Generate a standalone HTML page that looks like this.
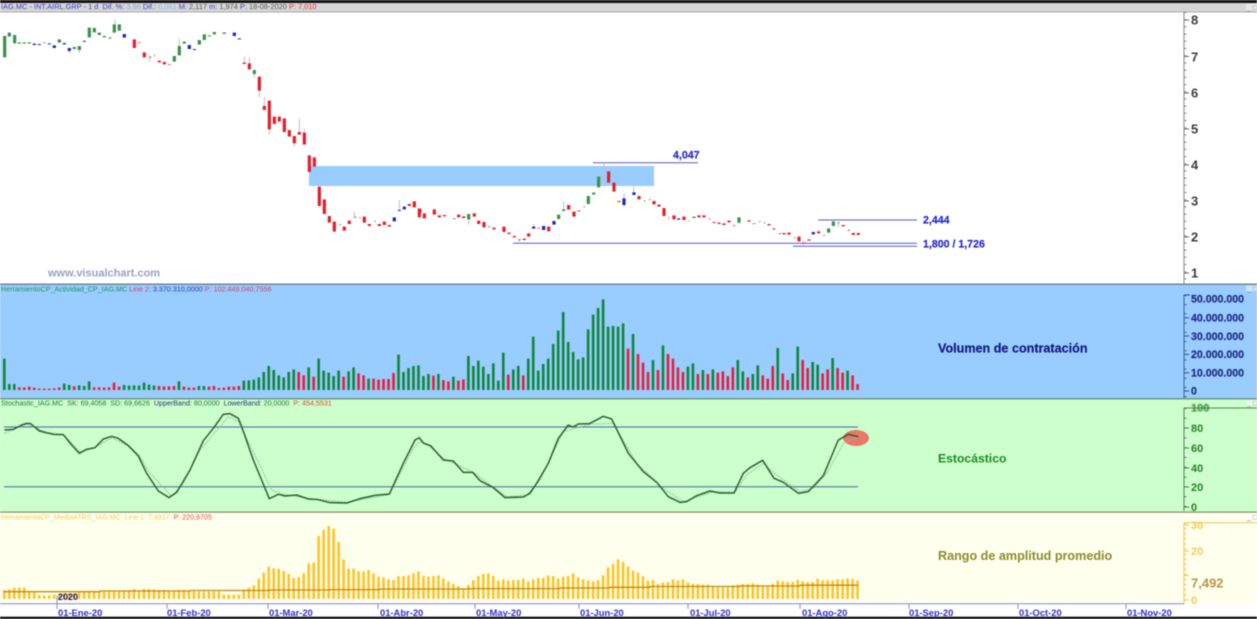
<!DOCTYPE html>
<html lang="es">
<head>
<meta charset="utf-8">
<title>IAG.MC</title>
<style>
html,body{margin:0;padding:0;width:1257px;height:619px;overflow:hidden;background:#fff}
svg{display:block;filter:blur(.45px)}
path,polyline{vector-effect:non-scaling-stroke;fill:none;stroke-linejoin:round}
text{font-family:"Liberation Sans",sans-serif}
</style>
</head>
<body>
<svg width="1257" height="619" viewBox="0 0 1257 619" xmlns="http://www.w3.org/2000/svg">
<!-- backgrounds -->
<rect x="0" y="0" width="1257" height="619" fill="#fff"/>
<rect x="0" y="0" width="1257" height="3" fill="#111"/>
<rect x="0" y="3" width="1257" height="9" fill="#d6d6d6"/>
<rect x="0" y="11.5" width="1257" height="1" fill="#aaa"/>
<rect x="0" y="284" width="1257" height="115" fill="#99ccff"/>
<rect x="0" y="283.5" width="1257" height="1.3" fill="#6b7a88"/>
<rect x="0" y="399" width="1257" height="113" fill="#ccffcc"/>
<rect x="0" y="398.2" width="1257" height="1.2" fill="#5f8a6a"/>
<rect x="0" y="512" width="1257" height="92" fill="#ffffee"/>
<rect x="0" y="511.5" width="1257" height="1.2" fill="#7f9060"/>
<rect x="0" y="604" width="1257" height="13" fill="#fff"/>
<rect x="0" y="616.7" width="1257" height="3" fill="#0c0c0c"/>

<!-- header texts -->
<text font-size="7.42" x="1" y="9.2"><tspan fill="#3a3acc">IAG.MC - INT.AIRL.GRP - 1 d&#160; Dif. %:</tspan><tspan fill="#88aadd"> 3,98 </tspan><tspan fill="#3a3acc">Dif.:</tspan><tspan fill="#88bbee"> 0,081 </tspan><tspan fill="#3a3acc">M:</tspan><tspan fill="#555"> 2,117 </tspan><tspan fill="#3a3acc">m:</tspan><tspan fill="#555"> 1,974 </tspan><tspan fill="#3a3acc">P:</tspan><tspan fill="#555"> 18-08-2020 </tspan><tspan fill="#e83030">P: 7,010</tspan></text>
<text font-size="7.2" x="1" y="291.5"><tspan fill="#22955a">HerramientoCP_Actividad_CP_IAG.MC </tspan><tspan fill="#d84060">Line 2: </tspan><tspan fill="#2a3faa">3.370.310,0000 </tspan><tspan fill="#d84060">P: 102.449.040,7556</tspan></text>
<text font-size="7.13" x="1" y="405.5"><tspan fill="#2a7a3a">Stochastic_IAG.MC&#160; SK: 69,4058&#160; SD: 69,6626&#160; </tspan><tspan fill="#26337a">UpperBand: </tspan><tspan fill="#2a7a3a">80,0000&#160; </tspan><tspan fill="#26337a">LowerBand: </tspan><tspan fill="#2a7a3a">20,0000&#160; </tspan><tspan fill="#e04a30">P: 454,5531</tspan></text>
<text font-size="7.1" x="1" y="519.5"><tspan fill="#f2cf60">HerramientaCP_MediaATRS_IAG.MC&#160; Line 1: 7,4917&#160; </tspan><tspan fill="#e84a4a">P: 220,9705</tspan></text>

<!-- window buttons -->
<g font-size="7" fill="#777">
<rect x="1246" y="4" width="11" height="7" fill="#e8e8e8"/><text x="1247" y="10">_ □</text>
<rect x="1246" y="285.5" width="11" height="6" fill="#cfe4fa"/><text x="1247" y="291">_ □</text>
<rect x="1246" y="400" width="11" height="6" fill="#e4f8e4"/><text x="1247" y="405.5">_ □</text>
<rect x="1246" y="514" width="11" height="6" fill="#fffff8"/><text x="1247" y="519.5">_ □</text>
</g>

<!-- main chart -->
<rect x="309" y="166" width="345" height="20" fill="#99ccff"/>
<text x="48" y="276.5" font-size="11" font-weight="bold" fill="#9a9fc4">www.visualchart.com</text>

<g stroke="#5a58c8" stroke-width="1" fill="none">
<path d="M593 162.7H698"/>
<path d="M818 220H917"/>
<path d="M513 243.3H917"/>
<path d="M793 246.3H917"/>
</g>
<g font-size="10.6" fill="#2a2acc" stroke="#2a2acc" stroke-width=".2" font-weight="bold">
<text x="673" y="158.5">4,047</text>
<text x="923" y="223.5">2,444</text>
<text x="923" y="247.5">1,800 / 1,726</text>
</g>

<!-- candles zone 1 -->
<g transform="scale(.33333)">
<path stroke="#c0c0c0" stroke-width="1" d="M345 58V73M733 170V188M748 172V190M793 290V318M778 272V292M808 388V405M898 355V396M913 385V398M883 430V440M538 115V138M448 165V185M463 162V172M1063 635V652M1198 600V630M238 150V160M208 153V160M328 110V118M448 172V174M463 165H466M763 222V232"/>
<path stroke="#3b8f4a" stroke-width="3.2" d="M14 108V172M28 98V110M44 105V130M58 127V131M73 127V131M88 127V131M133 127V129M178 118V128M223 141V147M238 138V150M253 122V126M268 83V112M283 84V97M298 98V105M313 108V112M343 73V98M358 73V92M523 168V185M538 138V166M553 125V131M598 120V134M613 103V120M628 106V109M643 96V103M763 210V222"/>
<path stroke="#2222bb" stroke-width="3.2" d="M103 131V135M118 132V135M148 130V133M163 136V144M193 129V133M208 144V153M373 102V113M568 135V147M583 147V150M673 98V101M703 98V108M718 115V118M1183 652V664M1198 630V633M1213 620V628"/>
<path stroke="#e0202c" stroke-width="3.2" d="M403 118V144M418 127V129M433 157V172M478 182V187M493 186V193M508 193V195M733 188V192M748 190V208M778 230V272M793 318V330M808 302V388M823 350V372M838 350V365M853 355V396M868 390V410M883 408V430M898 396V404M913 398V434M928 466V516M943 472V500M958 560V618M973 598V642M988 648V668M1003 665V695M1033 680V692M1048 662V672M1093 650V668M1108 672V678M1138 672V678M1153 665V675M1168 675V680M1228 612V618M1243 604V622M1258 625V652"/>
<path stroke="#777" stroke-width="1.2" d="M328 114H334M448 172H454M1018 674H1022M1063 652H1069M1078 653H1082M1123 664H1127"/>
</g>

<!-- candles zone 2 -->
<g transform="translate(420,140) scale(.33333)">
<path stroke="#c0c0c0" stroke-width="1" d="M552 68V110M146 238V254M431 185V208M641 140V157M612 160V175M612 195V202M1150 302V315M298 300V310M341 252V260M747 228V240M807 240V246M957 248V252"/>
<path stroke="#3b8f4a" stroke-width="3.2" d="M146 222V238M416 224V237M431 208V213M505 168V192M521 158V164M536 110V142M822 230V234M957 232V248M1226 265V278M1240 244V258"/>
<path stroke="#2222bb" stroke-width="3.2" d="M341 260V266M371 258V270M402 243V254M612 175V195M642 157V165M776 235V239M1180 276V283"/>
<path stroke="#e0202c" stroke-width="3.2" d="M0 208V218M13 220V235M43 208V224M58 226V232M73 225V229M116 224V232M131 229V234M163 220V230M176 242V252M192 246V262M222 263V268M252 260V276M267 278V282M283 288V292M298 298V300M313 296V300M326 280V290M356 264V266M386 260V274M446 195V209M462 215V230M476 212V214M566 94V128M582 128V155M657 168V178M702 183V193M717 194V200M732 204V228M762 226V238M792 230V240M837 226V232M852 226V232M882 246V249M897 248V252M912 250V255M927 242V247M942 256V258M987 241V245M1002 250V252M1047 252V256M1062 265V268M1092 279V283M1107 278V284M1137 290V304M1152 308V310M1167 298V302M1196 274V280"/>
<path stroke="#e88020" stroke-width="3.2" d="M597 182V187"/>
<path stroke="#777" stroke-width="1.2" d="M491 200H495M476 213H480M672 183H676M687 179H691M867 237H871M1017 245H1021M1032 248H1036M1077 281H1083M1122 293H1126M1210 286H1214M100 236H106M205 260H210"/>
</g>

<!-- candles zone 3 -->
<g transform="translate(780,190) scale(.33333)">
<path stroke="#c0c0c0" stroke-width="1" d="M175 100V112"/>
<path stroke="#e0202c" stroke-width="3.2" d="M190 105V109M220 129V135M235 129V135"/>
<path stroke="#777" stroke-width="1.2" d="M172 98H178M203 121H209"/>
</g>

<!-- axes main -->
<path d="M1184 12V284" stroke="#7a8a8a" stroke-width="1"/>
<path d="M1185.5 12V284" stroke="#888" stroke-width="2" stroke-dasharray="1 6.2"/>
<path d="M1184 20H1189M1184 56.5H1189M1184 93H1189M1184 129H1189M1184 165H1189M1184 201H1189M1184 237H1189M1184 273H1189" stroke="#666" stroke-width="1"/>
<g font-size="13" font-weight="bold" fill="#3c3c3c">
<text x="1191" y="24.5">8</text><text x="1191" y="61.5">7</text><text x="1191" y="97.5">6</text><text x="1191" y="133.5">5</text><text x="1191" y="169.5">4</text><text x="1191" y="205.5">3</text><text x="1191" y="241.5">2</text><text x="1191" y="277.5">1</text>
</g>

<!-- volume bars -->
<g transform="translate(4.3,280) scale(.998,.33333)">
<path stroke="#11863a" stroke-width="2.6" d="M0 236V330M5 312V330M10 312V330M60 311V330M65 315V330M75 316V330M80 318V330M85 304V330M120 315V330M125 317V330M130 316V330M135 317V330M140 308V330M145 314V330M150 317V330M175 304V330M195 318V330M200 318V330M240 302V330M245 301V330M250 299V330M255 292V330M260 276V330M265 258V330M270 270V330M275 286V330M280 292V330M285 276V330M290 268V330M305 262V330M315 236V330M320 272V330M325 278V330M330 288V330M335 272V330M345 274V330M350 262V330M365 296V330M395 224V330M400 276V330M405 264V330M410 258V330M415 256V330M420 288V330M425 282V330M435 282V330M450 290V330M465 228V330M470 258V330M475 242V330M480 260V330M485 282V330M490 250V330M495 302V330M500 218V330M510 268V330M515 258V330M525 236V330M530 170V330M535 272V330M540 252V330M545 236V330M550 192V330M555 152V330M560 96V330M565 186V330M570 216V330M575 238V330M580 232V330M585 148V330M590 104V330M595 84V330M600 58V330M605 140V330M610 138V330M615 140V330M620 130V330M630 162V330M650 240V330M660 196V330M685 260V330M690 250V330M700 270V330M710 268V330M735 240V330M740 274V330M750 282V330M755 256V330M775 204V330M790 280V330M795 200V330M810 246V330M815 254V330M830 234V330M845 272V330"/>
<path stroke="#e4203a" stroke-width="2.6" d="M15 322V330M20 322V330M25 320V330M30 323V330M35 326V330M40 326V330M45 326V330M50 325V330M55 322V330M70 319V330M90 322V330M95 322V330M100 323V330M105 322V330M110 308V330M115 320V330M155 318V330M160 319V330M165 319V330M170 318V330M180 320V330M185 323V330M190 323V330M205 320V330M210 318V330M215 324V330M220 323V330M225 320V330M230 320V330M235 318V330M295 276V330M300 286V330M310 290V330M340 290V330M355 280V330M360 286V330M370 296V330M375 299V330M380 297V330M385 297V330M390 279V330M430 287V330M440 300V330M445 304V330M455 302V330M460 298V330M505 284V330M520 286V330M625 206V330M635 222V330M640 248V330M645 276V330M655 270V330M665 222V330M670 236V330M675 262V330M680 276V330M695 282V330M705 282V330M715 278V330M720 274V330M725 288V330M730 262V330M745 292V330M760 286V330M765 296V330M770 258V330M780 280V330M785 300V330M800 240V330M805 264V330M820 280V330M825 268V330M835 264V330M840 278V330M850 286V330M855 312V330"/>
</g>

<!-- volume axis -->
<path d="M1184 295V398" stroke="#3f5fa0" stroke-width="1"/>
<path d="M1185.5 295V398" stroke="#3f5fa0" stroke-width="2" stroke-dasharray="1 8.2"/>
<path d="M1184 295H1190M1184 317.7H1189M1184 336H1189M1184 354.4H1189M1184 372.8H1189M1184 391H1189" stroke="#2a4a90" stroke-width="1"/>
<g font-size="10.6" font-weight="bold" fill="#1c2a80" stroke="#1c2a80" stroke-width=".15">
<text x="1191" y="302.7">50.000.000</text><text x="1191" y="321.3">40.000.000</text><text x="1191" y="339.8">30.000.000</text><text x="1191" y="358">20.000.000</text><text x="1191" y="376.4">10.000.000</text><text x="1191" y="394.5">0</text>
</g>
<text x="938" y="352.5" font-size="12.6" font-weight="bold" fill="#10187c" stroke="#10187c" stroke-width=".15">Volumen de contratación</text>

<!-- stochastic -->
<path d="M4 427H858M4 486.7H858" stroke="#3e66a8" stroke-width="1"/>
<ellipse cx="856" cy="438" rx="13" ry="8" fill="#e8786a"/>
<g transform="translate(0,395) scale(.33333)">
<polyline stroke="#9aba9a" stroke-width="1" stroke-dasharray="2 1" points="13,115 50,100 80,88 110,100 140,112 190,119 240,170 280,160 335,128 390,155 415,178 450,235 515,303 550,265 600,165 685,65 715,80 760,170 815,285 850,298 925,310 1040,322 1168,299 1240,160 1258,140 1290,150"/>
<polyline stroke="#2a6232" stroke-width="1.5" points="13,105 40,103 65,90 80,85 92,86 118,108 135,112 160,118 190,119 215,150 238,175 260,163 285,158 310,132 335,124 355,130 385,152 415,183 440,235 475,288 507,308 530,292 570,225 610,137 640,100 670,58 690,56 715,70 725,95 760,195 808,311 835,298 855,303 890,300 925,312 950,313 990,323 1040,324 1080,311 1125,301 1168,297 1210,205 1245,135 1258,128 1270,144 1290,152"/>
</g>
<g transform="translate(430,395) scale(.33333)">
<polyline stroke="#9aba9a" stroke-width="1" stroke-dasharray="2 1" points="0,155 40,190 130,232 230,305 290,300 330,255 400,110 480,88 550,85 620,205 700,280 760,320 850,290 915,292 950,240 1000,205 1040,240 1110,290 1150,280 1190,235 1240,145 1285,125"/>
<polyline stroke="#2a6232" stroke-width="1.5" points="0,150 40,195 70,198 100,232 128,232 150,257 190,278 225,308 280,306 300,295 320,265 355,205 385,130 415,90 428,96 445,87 478,86 520,64 545,72 595,175 640,230 680,262 715,305 750,322 770,320 800,302 840,288 870,294 912,294 940,235 960,218 998,196 1032,250 1060,262 1105,295 1135,290 1180,242 1225,135 1255,118 1285,125"/>
</g>
<path d="M1184 408H1257M1184 408V511" stroke="#5a7f5a" stroke-width="1"/>
<path d="M1185.5 408V511" stroke="#5a7f5a" stroke-width="2" stroke-dasharray="1 8.8"/>
<path d="M1184 428H1189M1184 448H1189M1184 468H1189M1184 487H1189M1184 507H1189" stroke="#4a7a4a" stroke-width="1"/>
<svg x="1190" y="408.5" width="40" height="12" overflow="hidden"><text x="1" y="3" font-size="11" font-weight="bold" fill="#2e7d2e">100</text></svg>
<g font-size="11" font-weight="bold" fill="#2e7d2e">
<text x="1191" y="432">80</text><text x="1191" y="452">60</text><text x="1191" y="472">40</text><text x="1191" y="491">20</text><text x="1191" y="511">0</text>
</g>
<text x="938" y="462.5" font-size="12.2" font-weight="bold" fill="#1f8a22">Estocástico</text>

<!-- ATR bars -->
<g transform="translate(4.3,510) scale(.998,.33333)">
<path stroke="#fbc42c" stroke-width="2.6" d="M0 240V267M5 238V267M10 233V267M15 233V267M20 233V267M25 247V267M30 248V267M35 255V267M40 256V267M45 256V267M50 254V267M55 254V267M60 250V267M65 250V267M70 250V267M75 245V267M80 245V267M85 245V267M90 245V267M95 245V267M100 245V267M105 245V267M110 245V267M115 245V267M120 241V267M125 241V267M130 237V267M135 245V267M140 237V267M145 237V267M150 238V267M155 240V267M160 240V267M165 245V267M170 245V267M175 240V267M180 240V267M185 243V267M190 244V267M195 245V267M200 245V267M205 245V267M210 245V267M215 245V267M220 254V267M225 254V267M230 254V267M235 254V267M240 238V267M245 233V267M250 226V267M255 206V267M260 188V267M265 170V267M270 175V267M275 176V267M280 183V267M285 192V267M290 204V267M295 201V267M300 190V267M305 160V267M310 158V267M315 78V267M320 60V267M325 48V267M330 56V267M335 96V267M340 148V267M345 176V267M350 176V267M355 184V267M360 184V267M365 180V267M370 190V267M375 200V267M380 202V267M385 208V267M390 210V267M395 198V267M400 198V267M405 196V267M410 190V267M415 184V267M420 198V267M425 200V267M430 198V267M435 196V267M440 206V267M445 214V267M450 222V267M455 228V267M460 235V267M465 225V267M470 210V267M475 198V267M480 192V267M485 190V267M490 198V267M495 212V267M500 208V267M505 212V267M510 210V267M515 210V267M520 206V267M525 214V267M530 208V267M535 204V267M540 204V267M545 196V267M550 198V267M555 206V267M560 200V267M565 198V267M570 190V267M575 202V267M580 208V267M585 212V267M590 214V267M595 210V267M600 196V267M605 172V267M610 162V267M615 148V267M620 156V267M625 170V267M630 182V267M635 188V267M640 198V267M645 212V267M650 210V267M655 222V267M660 218V267M665 216V267M670 208V267M675 212V267M680 208V267M685 218V267M690 222V267M695 222V267M700 224V267M705 224V267M710 228V267M715 232V267M720 232V267M725 232V267M730 226V267M735 224V267M740 222V267M745 222V267M750 220V267M755 224V267M760 230V267M765 230V267M770 222V267M775 212V267M780 214V267M785 216V267M790 216V267M795 210V267M800 214V267M805 216V267M810 216V267M815 206V267M820 211V267M825 211V267M830 211V267M835 208V267M840 208V267M845 205V267M850 207V267M855 212V267"/>
</g>
<path d="M4 591.7H100V591H190V590.5H270V590H330V589.6H380V589H470V588.6H560V588H610V587.3H650V586.5H740V586H800V585.2H858" stroke="#c08a10" stroke-width="1.3"/>
<text x="58" y="600" font-size="9" font-weight="bold" fill="#141470">2020</text>

<!-- ATR axis -->
<path d="M1184 522.7H1257M1184 522.7V604" stroke="#f0c850" stroke-width="1"/>
<path d="M1185.5 523V604" stroke="#f0c850" stroke-width="2" stroke-dasharray="1 4.1"/>
<path d="M1184 525H1189M1184 551H1189M1184 575.5H1189M1184 600H1189" stroke="#f0c850" stroke-width="1"/>
<g font-weight="bold">
<text x="1191" y="529" font-size="11" fill="#f2cb55">30</text>
<text x="1191" y="555" font-size="11" fill="#f2cb55">20</text>
<text x="1191" y="587.5" font-size="13" fill="#b8964a">7,492</text>
<text x="1191" y="604" font-size="11" fill="#f2cb55">0</text>
</g>
<text x="938" y="560" font-size="12.6" font-weight="bold" fill="#8a8c2e">Rango de amplitud promedio</text>

<!-- x axis -->
<path d="M0 603.7H1184" stroke="#8888dd" stroke-width="1"/>
<path d="M57 596V609M167 604V609M268 604V609M378 604V609M475 604V609M579 604V609M688 604V609M800 604V609M909 604V609M1018 604V609M1126 604V609" stroke="#8888dd" stroke-width="1"/>
<g font-size="9.4" font-weight="bold" fill="#3030cc">
<text x="58" y="616">01-Ene-20</text>
<text x="167" y="616">01-Feb-20</text>
<text x="269" y="616">01-Mar-20</text>
<text x="380" y="616">01-Abr-20</text>
<text x="476" y="616">01-May-20</text>
<text x="580" y="616">01-Jun-20</text>
<text x="690" y="616">01-Jul-20</text>
<text x="802" y="616">01-Ago-20</text>
<text x="909" y="616">01-Sep-20</text>
<text x="1019" y="616">01-Oct-20</text>
<text x="1127" y="616">01-Nov-20</text>
</g>
</svg>
</body>
</html>
